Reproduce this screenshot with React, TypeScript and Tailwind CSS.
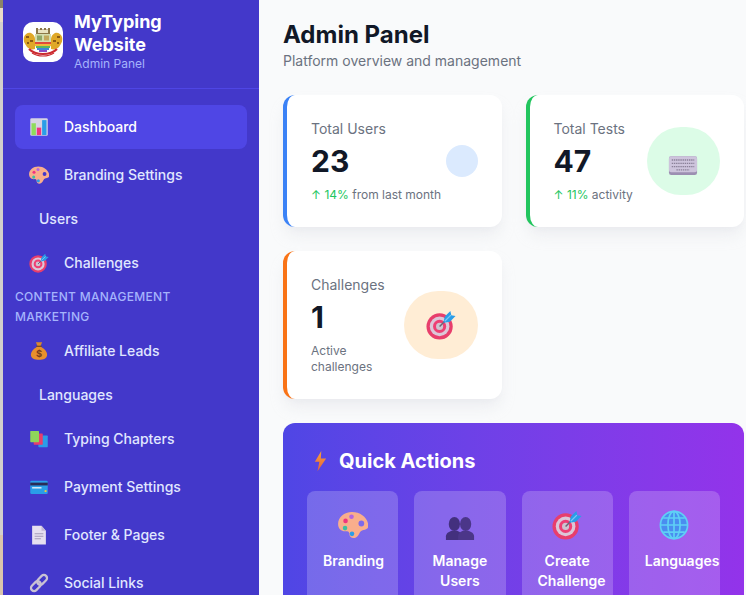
import type { ReactNode } from "react";

type IconProps = { size?: number };

function Svg({ size = 20, children }: IconProps & { children: ReactNode }) {
  return (
    <svg width={size} height={size} viewBox="0 0 32 32" className="shrink-0">
      {children}
    </svg>
  );
}

function ChartIcon({ size }: IconProps) {
  return (
    <Svg size={size}>
      <rect x="2" y="2" width="28" height="28" rx="2" fill="#d6d3e4" />
      <rect x="4" y="10" width="7" height="19" fill="#8fdc5c" />
      <rect x="12.5" y="17" width="7" height="12" fill="#f0357f" />
      <rect x="21" y="5" width="7" height="24" fill="#2a9de8" />
    </Svg>
  );
}

function PaletteIcon({ size }: IconProps) {
  return (
    <Svg size={size}>
      <g transform="translate(16 16) scale(1.06 1.1) translate(-16 -16.5)">
        <path
          fillRule="evenodd"
          fill="#f9ae8c"
          d="M15 4C7 4 1 9 1 15.5c0 5 4 7.5 8 7 3-.4 3.5 1.500 3.500 3.500 0 2.500 3.500 4 6.500 2.500 2-1 3-3 4-5 1-2 3-2 5-2.500 2.500-.7 3.500-2 3.500-4C31 10 24 4 15 4zM21.500 15a2.900 2.900 0 1 0 5.800 0a2.900 2.900 0 1 0-5.800 0z"
        />
        <circle cx="8.500" cy="12.500" r="2.300" fill="#f0357f" />
        <circle cx="14.500" cy="8.500" r="2.300" fill="#b565e0" />
        <circle cx="8" cy="19.500" r="2.300" fill="#3cc0a0" />
        <circle cx="15" cy="25" r="2.300" fill="#2a9de8" />
      </g>
    </Svg>
  );
}

function TargetIcon({ size }: IconProps) {
  return (
    <Svg size={size}>
      <circle cx="14.500" cy="17.500" r="14" fill="#e83e6c" />
      <circle cx="14.500" cy="17.500" r="10.500" fill="#dcc6d8" />
      <circle cx="14.500" cy="17.500" r="7" fill="#ee3f74" />
      <circle cx="14.500" cy="17.500" r="3.800" fill="#cfc4d0" />
      <path d="M14.500 17.500L25 7" stroke="#6b6478" strokeWidth="1.6" />
      <path d="M18.500 13.500l1.500-6.500 6-6 1 4.500 4.500 1-6 6z" fill="#2a9de8" />
      <path d="M20 12l6.500-6.500" stroke="#7cc8f4" strokeWidth="1.400" />
    </Svg>
  );
}

function BagIcon({ size }: IconProps) {
  return (
    <Svg size={size}>
      <path d="M11 2h10l-2.500 6h-5z" fill="#d9892b" />
      <rect x="11.500" y="7.500" width="9" height="2" fill="#7b4a1e" />
      <path d="M12.500 9.500h7C26 13 29 18 29 22c0 6-6 8-13 8S3 28 3 22c0-4 3-9 9.500-12.500z" fill="#e8902c" />
      <text x="16" y="26" textAnchor="middle" fontSize="15" fontWeight="700" fill="#7a3f1c" fontFamily="Inter, sans-serif">
        $
      </text>
    </Svg>
  );
}

function BooksIcon({ size }: IconProps) {
  return (
    <Svg size={size}>
      <rect x="15" y="10.500" width="15" height="18.500" rx="1" fill="#2a9de8" />
      <rect x="7.500" y="7" width="14.500" height="18" rx="1" fill="#e83e6c" />
      <rect x="2" y="3" width="14" height="18" rx="1" fill="#8fd45a" />
    </Svg>
  );
}

function CardIcon({ size }: IconProps) {
  return (
    <Svg size={size}>
      <rect x="2" y="6" width="28" height="21" rx="2" fill="#2a9de8" />
      <rect x="2" y="9" width="28" height="4.500" fill="#2b2b55" />
      <rect x="5" y="16" width="15" height="2.500" fill="#cfe6f6" />
      <rect x="25" y="21" width="3" height="3" fill="#f5c63c" />
    </Svg>
  );
}

function PageIcon({ size }: IconProps) {
  return (
    <Svg size={size}>
      <path d="M5 1h15l7 8v22H5z" fill="#e6dff0" />
      <path d="M20 1l7 8h-7z" fill="#c4b9d6" />
      <path d="M9 14h14M9 18h14M9 22h10" stroke="#a59bb8" strokeWidth="1.600" />
    </Svg>
  );
}

function LinkIcon({ size }: IconProps) {
  return (
    <Svg size={size}>
      <g fill="none" stroke="#c9c2d4" strokeWidth="3.600">
        <rect x="2" y="16" width="18" height="10" rx="5" transform="rotate(-45 11 21)" />
        <rect x="12" y="6" width="18" height="10" rx="5" transform="rotate(-45 21 11)" />
      </g>
    </Svg>
  );
}

function KeyboardIcon({ size }: IconProps) {
  return (
    <Svg size={size}>
      <rect x="1" y="11" width="30" height="20" rx="2.500" fill="#9c8fb2" />
      <rect x="1" y="11" width="30" height="17" rx="2.500" fill="#cdc4dc" />
      <g stroke="#8a8098" strokeWidth="1.500" strokeDasharray="1.500 .8">
        <path d="M4 15h24M4 18.500h24M4 22h24" />
        <path d="M9 25.500h14" />
      </g>
    </Svg>
  );
}

function BoltIcon({ size }: IconProps) {
  return (
    <Svg size={size}>
      <defs>
        <linearGradient id="bolt" x1="0" y1="0" x2="0" y2="1">
          <stop offset="0" stopColor="#f9a23c" />
          <stop offset="1" stopColor="#e4603c" />
        </linearGradient>
      </defs>
      <path d="M19 2.500L10.500 17h6L14 29.500 25.500 12.500h-7z" fill="url(#bolt)" />
    </Svg>
  );
}

function UsersIcon({ size }: IconProps) {
  return (
    <Svg size={size}>
      <g fill="#43307e">
        <ellipse cx="10" cy="15" rx="6" ry="7.500" />
        <path d="M1 32v-4c0-3 3-5 6-6h6c3 1 5 3 5 6v4z" />
      </g>
      <g fill="#4b3689">
        <ellipse cx="22" cy="15" rx="6" ry="7.500" />
        <path d="M14 32v-4c0-3 2-5 5-6h6c3 1 6 3 6 6v4z" />
      </g>
    </Svg>
  );
}

function GlobeIcon({ size }: IconProps) {
  return (
    <Svg size={size}>
      <circle cx="16" cy="16" r="14.500" fill="#4a8df0" />
      <g fill="none" stroke="#5fd0f5" strokeWidth="1.800">
        <circle cx="16" cy="16" r="14.500" />
        <ellipse cx="16" cy="16" rx="6.500" ry="14.500" />
        <path d="M16 2v28M2 16h28M4.500 8.500h23M4.500 23.500h23" />
      </g>
    </Svg>
  );
}

function Crest() {
  return (
    <svg width="40" height="30" viewBox="0 0 40 30">
      {/* lions */}
      <path d="M1 10c1-3 4-5 7-4 2 1 4 3 4 6v10c-3 1-6 0-8-2-2-3-4-6-3-10z" fill="#e0a827" />
      <path d="M39 10c-1-3-4-5-7-4-2 1-4 3-4 6v10c3 1 6 0 8-2 2-3 4-6 3-10z" fill="#e0a827" />
      <path d="M3 9h3v2H3zM7 13h3v2H7zM4 15h2v2H4zM34 9h3v2h-3zM30 13h3v2h-3zM34 15h2v2h-2z" fill="#8a5a14" />
      {/* tower */}
      <path d="M13 1h2v1.500h2V1h2v1.500h2V1h2v1.500h2V1h2v6H13z" fill="#8b7748" />
      <rect x="15" y="3" width="10" height="3" fill="#e8e2c0" />
      {/* shield */}
      <path d="M12 7h16v10c0 4-4 7-8 8-4-1-8-4-8-8z" fill="#d3dcae" />
      <rect x="14" y="8.500" width="5" height="5" fill="#8fa868" />
      <rect x="21" y="8.500" width="5" height="5" fill="#c2a95c" />
      <rect x="12" y="15" width="16" height="2" fill="#e0483c" />
      <rect x="12" y="17" width="16" height="2" fill="#f0b93a" />
      <rect x="13" y="19" width="14" height="2" fill="#5cb85c" />
      <rect x="14" y="21" width="12" height="2" fill="#3f86d8" />
      <rect x="16" y="23" width="8" height="2" fill="#8a4bc4" />
      {/* ribbon */}
      <path d="M6 22c4 4 9 5 14 5s10-1 14-5" fill="none" stroke="#cc2a30" strokeWidth="2.200" />
      <path d="M9 26c3 2 7 3 11 3s8-1 11-3" fill="none" stroke="#cc2a30" strokeWidth="1.200" />
    </svg>
  );
}

const Label = ({ children }: { children: ReactNode }) => (
  <div className="mb-1 text-xs leading-4 font-medium uppercase tracking-wide text-[#a5b4fc]">{children}</div>
);

function NavItem({ icon, label, active }: { icon?: ReactNode; label: string; active?: boolean }) {
  if (!icon) {
    return (
      <a className="flex items-center h-9 mb-1 pl-6 rounded-lg text-sm font-medium text-[#e0e7ff]">{label}</a>
    );
  }
  return (
    <a
      className={
        active
          ? "flex items-center h-11 mb-1 pl-[14px] gap-[15px] rounded-lg text-sm font-medium text-white bg-[#4f46e5]"
          : "flex items-center h-11 mb-1 pl-[14px] gap-[15px] rounded-lg text-sm font-medium text-[#e0e7ff]"
      }
    >
      {icon}
      {label}
    </a>
  );
}

function StatCard({
  title,
  value,
  children,
  border,
  circle,
  icon,
}: {
  title: string;
  value: string;
  children: ReactNode;
  border: string;
  circle: string;
  icon?: ReactNode;
}) {
  return (
    <div className={`bg-white rounded-xl shadow-lg shadow-gray-200/70 border-l-4 p-6 flex items-center justify-between ${border}`}>
      <div>
        <p className="text-sm text-[#6b7280]">{title}</p>
        <p className="mt-1 text-3xl font-bold text-[#111827]">{value}</p>
        <p className="mt-2 text-xs text-[#6b7280]">{children}</p>
      </div>
      <div className={`p-4 rounded-full shrink-0 ${circle}`}>
        {icon && <div className="w-[41.5px] h-9 flex items-center justify-center">{icon}</div>}
      </div>
    </div>
  );
}

function ActionTile({ icon, label }: { icon: ReactNode; label: string }) {
  return (
    <div className="bg-white/20 rounded-lg p-4 text-center text-sm font-semibold text-white">
      <div className="h-9 mb-2 flex items-center justify-center">{icon}</div>
      <div>{label}</div>
    </div>
  );
}

export default function App() {
  return (
    <div className="flex h-screen overflow-hidden bg-[#f9fafb] font-['Inter',sans-serif]">
      {/* window behind the sidebar */}
      <div className="w-[3px] shrink-0 flex flex-col bg-[#d2cfcc]">
        <div className="h-[8px] bg-[#8b8468]" />
        <div className="h-[14px] bg-[#e9dcc8]" />
        <div className="flex-1" />
        <div className="h-[60px] bg-[#d9c4ac]" />
      </div>

      {/* Sidebar */}
      <aside className="w-64 shrink-0 bg-[#4338ca] text-white">
        <div className="h-[89px] px-5 pb-[5px] flex items-center gap-[11px] border-b border-[#4f46e5]">
          <div className="w-10 h-10 bg-white rounded-[10px] flex items-center justify-center shrink-0 overflow-hidden">
            <Crest />
          </div>
          <div>
            <h1 className="text-lg leading-[22.5px] font-bold">
              MyTyping
              <br />
              Website
            </h1>
            <p className="text-xs leading-4 text-[#a5b4fc]">Admin Panel</p>
          </div>
        </div>
        <nav className="px-3 pt-4">
          <NavItem active icon={<ChartIcon />} label="Dashboard" />
          <NavItem icon={<PaletteIcon />} label="Branding Settings" />
          <NavItem label="Users" />
          <NavItem icon={<TargetIcon />} label="Challenges" />
          <Label>Content Management</Label>
          <Label>Marketing</Label>
          <NavItem icon={<BagIcon />} label="Affiliate Leads" />
          <NavItem label="Languages" />
          <NavItem icon={<BooksIcon />} label="Typing Chapters" />
          <NavItem icon={<CardIcon />} label="Payment Settings" />
          <NavItem icon={<PageIcon />} label="Footer & Pages" />
          <NavItem icon={<LinkIcon />} label="Social Links" />
        </nav>
      </aside>

      {/* Main */}
      <main className="flex-1 min-w-0 pl-6 pr-0.5 pt-[19px]">
        <h2 className="text-2xl font-bold text-[#111827]">Admin Panel</h2>
        <p className="text-sm text-[#6b7280] mb-6">Platform overview and management</p>

        <div className="grid grid-cols-2 gap-6 items-start mb-6">
          <StatCard
            title="Total Users"
            value="23"
            border="border-[#3b82f6]"
            circle="bg-[#dbeafe]"
          >
            <span className="text-[#22c55e]">↑ 14%</span> from last month
          </StatCard>
          <StatCard
            title="Total Tests"
            value="47"
            border="border-[#22c55e]"
            circle="bg-[#dcfce7]"
            icon={<KeyboardIcon size={30} />}
          >
            <span className="text-[#22c55e]">↑ 11%</span> activity
          </StatCard>
          <StatCard
            title="Challenges"
            value="1"
            border="border-[#f97316]"
            circle="bg-[#ffedd5]"
            icon={<TargetIcon size={30} />}
          >
            Active challenges
          </StatCard>
        </div>

        <section className="rounded-xl p-6 bg-linear-to-r from-[#4f46e5] to-[#9333ea]">
          <h3 className="flex items-center gap-2 mb-4 text-xl font-bold text-white">
            <BoltIcon size={24} />
            Quick Actions
          </h3>
          <div className="grid grid-cols-4 gap-4">
            <ActionTile icon={<PaletteIcon size={30} />} label="Branding" />
            <ActionTile icon={<UsersIcon size={30} />} label="Manage Users" />
            <ActionTile icon={<TargetIcon size={30} />} label="Create Challenge" />
            <ActionTile icon={<GlobeIcon size={30} />} label="Languages" />
          </div>
        </section>
      </main>
    </div>
  );
}
